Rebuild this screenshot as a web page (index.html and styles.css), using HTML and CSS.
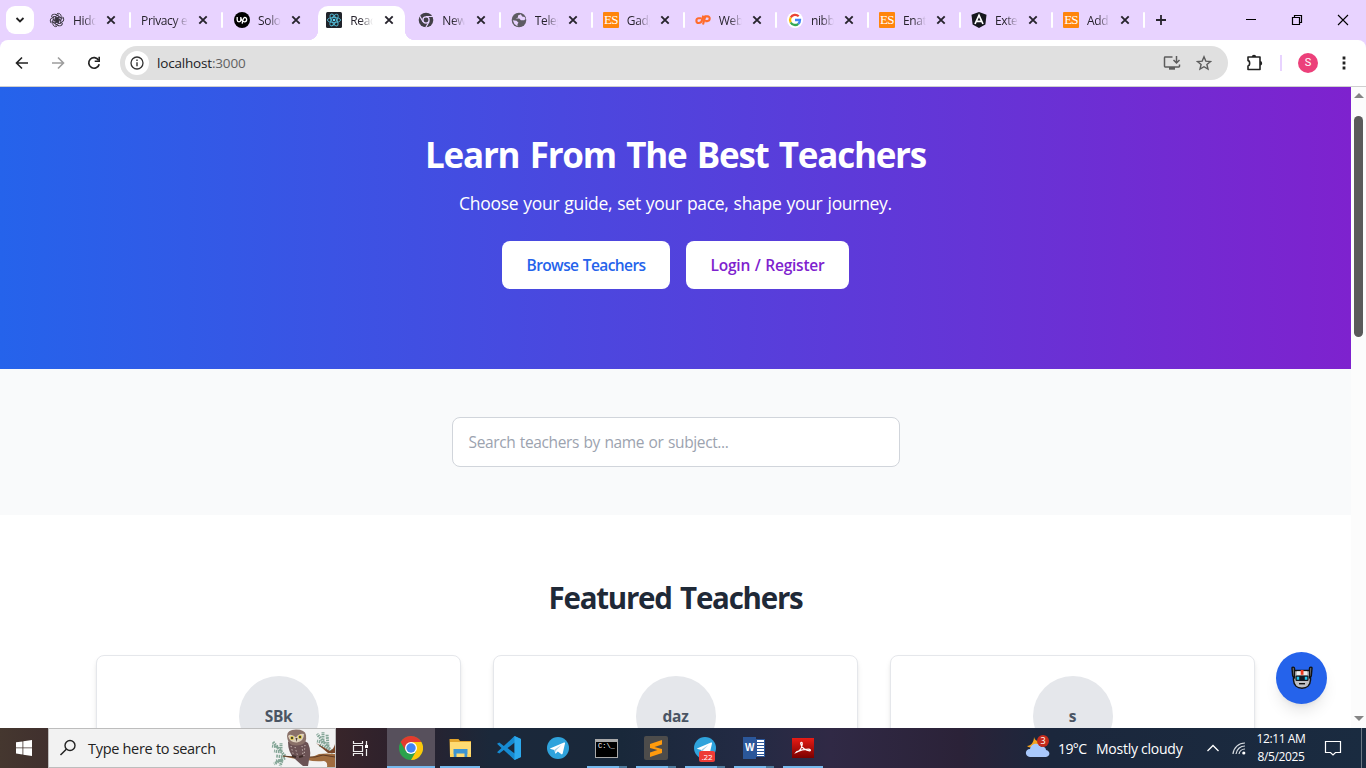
FILE: index.html
```html
<!DOCTYPE html>
<html lang="en">
<head>
<meta charset="utf-8">
<title>React App</title>
<link rel="stylesheet" href="styles.css">
</head>
<body>
<svg class="defs" width="0" height="0">
  <defs>
    <symbol id="x" viewBox="0 0 10 10"><path d="M1.3 1.3l7.4 7.4M8.7 1.3L1.3 8.7" stroke="#27242d" stroke-width="1.9" fill="none"/></symbol>
    <symbol id="plane" viewBox="0 0 24 24"><circle cx="12" cy="12" r="11" fill="#2fa3dc"/><path d="M4.5 12.3L18 6.6c.8-.3 1.200.2 1 1l-2.300 10c-.2.900-.9 1-1.600.5l-3.300-2.500-1.700 1.700c-.5.500-.9.300-1-.3l-.7-3.100-3.800-1c-.8-.2-.8-.3-.1-.6z" fill="#fff"/><path d="M8.600 13.500l6.800-4.500-5.200 5.300-.2 2.600z" fill="#a9cfe4"/></symbol>
  </defs>
</svg>
<div class="screen">
  <header class="tabstrip">
    <button class="tabsearch"><svg width="10" height="8" viewBox="0 0 10 8"><path d="M1.500 2l3.500 3.500L8.500 2" fill="none" stroke="#222" stroke-width="1.800"/></svg></button>
    <nav class="tabs">
      <div class="tab"><svg class="fav" viewBox="0 0 16 16"><g fill="none" stroke="#333039" stroke-width=".9"><g id="petal"><path d="M8 1.700c2-1 4.200.5 4.200 2.600v3.500L9.300 9.500 6.400 8V4.500L9.600 2.700"/></g><use href="#petal" transform="rotate(60 8 8)"/><use href="#petal" transform="rotate(120 8 8)"/><use href="#petal" transform="rotate(180 8 8)"/><use href="#petal" transform="rotate(240 8 8)"/><use href="#petal" transform="rotate(300 8 8)"/></g></svg><span class="name">Hidde</span><svg class="close"><use href="#x"/></svg></div>
      <div class="tab"><span class="name wide">Privacy err</span><svg class="close"><use href="#x"/></svg></div>
      <div class="tab last"><svg class="fav" viewBox="0 0 16 16"><circle cx="8" cy="8" r="8" fill="#000"/><path d="M3.200 5v3.100c0 2.400 3.600 2.400 3.600 0V5M6.800 5.600c.8 2.600 1.900 4.200 3.700 4.200 2.700 0 3-4.300.2-4.300-1.500 0-1.900 1.500-2.500 6.200" fill="none" stroke="#fff" stroke-width="1.300"/></svg><span class="name">Solom</span><svg class="close"><use href="#x"/></svg></div>
      <div class="tab active"><svg class="fav" viewBox="0 0 16 16"><rect width="16" height="16" rx="1.500" fill="#20232a"/><g fill="none" stroke="#51b8d2" stroke-width=".9"><ellipse cx="8" cy="8" rx="6.600" ry="2.600"/><ellipse cx="8" cy="8" rx="6.600" ry="2.600" transform="rotate(60 8 8)"/><ellipse cx="8" cy="8" rx="6.600" ry="2.600" transform="rotate(120 8 8)"/></g><circle cx="8" cy="8" r="1.300" fill="#61dafb"/></svg><span class="name">React</span><svg class="close"><use href="#x"/></svg></div>
      <div class="tab"><svg class="fav" viewBox="0 0 16 16"><circle cx="8" cy="8" r="7.300" fill="#424047"/><circle cx="8" cy="8" r="3.100" fill="#424047" stroke="#e8d3ff" stroke-width="1.300"/><path d="M8 4.500h7M5 9.800L1.600 3.800M11 9.800l-3.400 6" stroke="#e8d3ff" stroke-width="1.200"/></svg><span class="name">New</span><svg class="close"><use href="#x"/></svg></div>
      <div class="tab"><svg class="fav" viewBox="0 0 16 16"><circle cx="8" cy="8" r="7.300" fill="#5e5b63"/><path d="M9.800 2.300L7 3.400v2L4.700 6.600h3.600l1.600 1.700h3.300l1.300-1.300-.8-2-2.500-.5zM1.800 8.300l3.700.4 2 2-1 1.200v2.300L3.400 12z" fill="#e8d3ff"/></svg><span class="name">Teleg</span><svg class="close"><use href="#x"/></svg></div>
      <div class="tab"><b class="fav es">ES</b><span class="name">Gadg</span><svg class="close"><use href="#x"/></svg></div>
      <div class="tab"><svg class="fav" viewBox="0 0 16 16"><path d="M6.300 6.300H3.700C.6 6.300.6 11 3.700 11c2.200 0 2.800-1 3.200-2.500L8.300 3.600M8 12.500l2.300-8.100h2.200c3.200 0 2.700 4.700-.3 4.700h-2" fill="none" stroke="#ff6c2c" stroke-width="2.100"/></svg><span class="name">Webm</span><svg class="close"><use href="#x"/></svg></div>
      <div class="tab"><svg class="fav" viewBox="0 0 16 16"><circle cx="8" cy="8" r="8" fill="#fff"/><g fill="none" stroke-width="2.300"><path d="M11.700 4.300A5 5 0 0 0 3.700 5.500" stroke="#ea4335"/><path d="M3.700 5.500a5 5 0 0 0 0 5" stroke="#fbbc05"/><path d="M3.700 10.500a5 5 0 0 0 7.600 1.300" stroke="#34a853"/><path d="M11.300 11.800A5 5 0 0 0 13 8H8" stroke="#4285f4"/></g></svg><span class="name">nibbl</span><svg class="close"><use href="#x"/></svg></div>
      <div class="tab"><b class="fav es">ES</b><span class="name">Enate</span><svg class="close"><use href="#x"/></svg></div>
      <div class="tab"><svg class="fav" viewBox="0 0 16 16"><path d="M8 0l7.500 2.700-1.100 9.800L8 16l-6.400-3.500L.5 2.700z" fill="#16171d"/><path d="M4 12L8 3.200l4 8.800M5.700 9.300h4.600" stroke="#fff" stroke-width="1.700" fill="none"/></svg><span class="name">Exten</span><svg class="close"><use href="#x"/></svg></div>
      <div class="tab"><b class="fav es">ES</b><span class="name">Add l</span><svg class="close"><use href="#x"/></svg></div>
    </nav>
    <svg class="plus" width="12" height="12" viewBox="0 0 12 12"><path d="M6 1v10M1 6h10" stroke="#28242e" stroke-width="1.800"/></svg>
    <div class="winctl">
      <svg width="12" height="12" viewBox="0 0 12 12"><path d="M1 5.500h10" stroke="#000"/></svg>
      <svg width="12" height="12" viewBox="0 0 12 12"><path d="M1.500 3.500h7v7h-7zM3.500 3.500v-2h7v7h-2" stroke="#000" stroke-width="1.200" fill="none"/></svg>
      <svg width="12" height="12" viewBox="0 0 12 12"><path d="M1 1l10 10M11 1L1 11" stroke="#000" stroke-width="1.100"/></svg>
    </div>
  </header>
  <div class="toolbar">
    <div class="navbtns">
      <svg width="16" height="16" viewBox="0 0 16 16"><path d="M14 8H3M8 2.500L2.500 8 8 13.500" fill="none" stroke="#222" stroke-width="1.600"/></svg>
      <svg width="16" height="16" viewBox="0 0 16 16"><path d="M2 8h11M8 2.500L13.500 8 8 13.500" fill="none" stroke="#9d9d9d" stroke-width="1.600"/></svg>
      <svg width="16" height="16" viewBox="0 0 16 16"><path d="M12.600 5.200A5.300 5.300 0 1 0 13.200 9.200" fill="none" stroke="#222" stroke-width="1.700"/><path d="M14 1.800v5.300H8.700V5.500h3.700V1.800z" fill="#222"/></svg>
    </div>
    <div class="omnibox">
      <span class="info"><svg width="14" height="14" viewBox="0 0 14 14"><circle cx="7" cy="7" r="6" fill="none" stroke="#333" stroke-width="1.300"/><path d="M7 6.200v4M7 3.600v1.400" stroke="#333" stroke-width="1.400"/></svg></span>
      <span class="url">localhost<i>:3000</i></span>
      <svg class="install" width="18" height="16" viewBox="0 0 18 16"><path d="M9.500 2H2.200c-.4 0-.7.300-.7.700v8.600c0 .4.300.7.700.7h13.600c.4 0 .7-.3.700-.7V9.500" fill="none" stroke="#5c5c5c" stroke-width="1.500"/><path d="M6 12h6v2.700H6z" fill="#5c5c5c"/><path d="M13.500 1v7M10.500 5l3 3 3-3" fill="none" stroke="#5c5c5c" stroke-width="1.500"/></svg>
      <svg width="16" height="16" viewBox="0 0 16 16"><path d="M8 1.800l1.800 4.300 4.700.4-3.600 3 1.100 4.600L8 11.700l-4 2.400 1.100-4.600-3.600-3 4.700-.4z" fill="none" stroke="#5c5c5c" stroke-width="1.400"/></svg>
    </div>
    <svg class="ext" width="18" height="18" viewBox="0 0 18 18"><path d="M2 3h12v12.500H2V12c2.200-.4 2.200-5 0-5.400z" fill="none" stroke="#222" stroke-width="1.600" stroke-linejoin="round"/><path d="M5.800 3a2.200 2.200 0 0 1 4.400 0zM14 7a2.200 2.200 0 0 1 0 4.400z" fill="#222"/></svg>
    <span class="divider"></span>
    <span class="profile">S</span>
    <svg class="kebab" width="4" height="14" viewBox="0 0 4 14"><path d="M.6.600h2.800v2.800H.6zM.6 5.600h2.800v2.800H.6zM.6 10.600h2.800v2.800H.6z" fill="#222"/></svg>
  </div>
  <div class="viewport">
    <main class="page">
      <section class="hero">
        <h1>Learn From The Best Teachers</h1>
        <p>Choose your guide, set your pace, shape your journey.</p>
        <div class="actions"><a class="btn browse">Browse Teachers</a><a class="btn login">Login / Register</a></div>
      </section>
      <section class="search"><div class="field"><span>Search teachers by name or subject...</span></div></section>
      <section class="featured">
        <h2>Featured Teachers</h2>
        <div class="cards">
          <article class="card"><div class="avatar">SBk</div></article>
          <article class="card"><div class="avatar">daz</div></article>
          <article class="card"><div class="avatar">s</div></article>
        </div>
      </section>
    </main>
    <aside class="scrollbar"><i class="up"></i><i class="thumb"></i><i class="down"></i></aside>
    <button class="chat"><svg width="24" height="24" viewBox="0 0 24 24"><path d="M3.500 4.500h17v9.500c-.3 5-3.500 8.300-8.500 8.300S3.800 19 3.500 14z" fill="#bfc0c4" stroke="#111" stroke-width="1.500"/><path d="M2 2.200c0-1.500 2.500-1.500 2.500 0v9.500L2.700 10zM22 2.200c0-1.500-2.500-1.500-2.500 0v9.500l1.800-1.700z" fill="#77787c" stroke="#111" stroke-width="1.400"/><path d="M7 5.300h10V9H7z" fill="#eee"/><path d="M10.700 4h2.800v4.800h-2.800z" fill="#ed3b20"/><rect x="5.500" y="9.500" width="13" height="5.500" rx="1" fill="#111820"/><path d="M6.700 10.700h2.500v3H6.700zM14.800 10.700h2.500v3h-2.500z" fill="#24c3ee"/><path d="M9 17.700h6" stroke="#111" stroke-width="1.400"/></svg></button>
  </div>
  <footer class="taskbar">
    <div class="start"><svg width="16" height="16" viewBox="0 0 16 16"><path d="M0 2.300l6.500-.9v6.100H0zM7.300 1.200L16 0v7.500H7.300zM0 8.300h6.500v6.200L0 13.600zM7.300 8.300H16V16l-8.700-1.300z" fill="#fff"/></svg></div>
    <div class="tsearch">
      <svg width="18" height="18" viewBox="0 0 18 18"><circle cx="11" cy="6.500" r="5" fill="none" stroke="#222" stroke-width="1.400"/><path d="M7.300 10.200L1.500 16" stroke="#222" stroke-width="1.500"/></svg>
      <span>Type here to search</span>
      <svg class="owl" width="64" height="38" viewBox="0 0 64 38">
        <g fill="none" stroke="#83a596" stroke-width="3" stroke-dasharray="1.600 .8"><path d="M14 27L2 13M11 23l-8-1M10 22V14M7 18l-6-1M14 28l-9-1M62 24L46 5M59 20l-11-4M57 17L56 5M54 14l-8-2M52 11V3M14 29L3 35M11 31l-6 1M11 32l-2 5"/></g>
        <path d="M10 27q10 1 17 1 12 2 21-3 8-1 16 0v13H56q1-5-3-6-9 1-17-1-14-1-26-4z" fill="#a06c3f"/><path d="M64 15q-1 5-5 7l-14-8 12 10h7z" fill="#7a4628"/><path d="M12 27q14 2 24 1 8 1 16-2l12 2" fill="none" stroke="#5c3823"/>
        <path d="M17 13q9-7 20 1 4 9 1 17l-1 6h-5q-5-4-9-8-6-6-6-16z" fill="#6b5254"/><path d="M16 7q0-6.500 9-6.500T35 6q1 8-4 9.500-5 1.500-10 .5-4.500-2-5-9z" fill="#8a7169"/><path d="M17 7q3-3 8 1.500Q28 4 33 5q0 7-7 8.500-7 .5-9-6.500z" fill="#ddd0bb"/><circle cx="21" cy="9" r="1.900" fill="#d5c038"/><circle cx="29" cy="8" r="1.900" fill="#d5c038"/><circle cx="21" cy="9" r="1" fill="#222"/><circle cx="29" cy="8" r="1" fill="#222"/><path d="M24.500 9h2l-1 4z" fill="#524236"/>
        <g stroke="#cfc0bb" stroke-width="1" stroke-dasharray="1.200 2.200"><path d="M20 17l3 11M24 18l3 10M31 17l1 9M34 16l-1 11"/></g><path d="M21 27l4 1M28 28l4-1" stroke="#3e2c28" stroke-width="2.200"/>
      </svg>
    </div>
    <div class="app view"><svg width="17" height="17" viewBox="0 0 17 17"><path d="M1.500 1v2.500h9V1M1.500 5.500h9v6h-9zM1.500 16v-2.500h9V16" fill="none" stroke="#eee" stroke-width="1.200"/><path d="M14.500 1v4M14.500 9v7" stroke="#eee" stroke-width="1.200"/><path d="M13 5h3v3h-3z" fill="#fff"/></svg></div>
    <div class="apps">
      <div class="app on"><svg width="24" height="24" viewBox="0 0 24 24"><circle cx="12" cy="12" r="12" fill="#2ba24c"/><path d="M1.600 6A12 12 0 0 1 22.400 6H12L6.800 15z" fill="#e33b2e"/><path d="M22.400 6A12 12 0 0 1 12 24l5.200-9L12 6z" fill="#fdc70c"/><circle cx="12" cy="12" r="6" fill="#fff"/><circle cx="12" cy="12" r="4.700" fill="#4284f3"/></svg></div>
      <div class="app run"><svg width="24" height="24" viewBox="0 0 24 24"><path d="M1.500 3h9l1.500 2h11v16h-21z" fill="#e2a42a"/><path d="M2 6h21v15H2z" fill="#ffdb72"/><path d="M5.500 21v-8h14v8h-3v-3.500h-8V21z" fill="#3d95d2"/><path d="M2 18h3.500v3H2zM19.500 18H23v3h-3.500z" fill="#ffd45b"/></svg></div>
      <div class="app"><svg width="24" height="24" viewBox="0 0 24 24"><path d="M17.500 0L24 3v18l-6.500 3L6.800 13.900 2.300 17.500 0 16.300l4.500-4.300L0 7.700l2.300-1.200 4.500 3.600zM17.700 6.600L10.500 12l7.200 5.400z" fill="#168bd2" fill-rule="evenodd"/><path d="M17.500 0L24 3v18l-6.500 3z" fill="#2ca9ed"/></svg></div>
      <div class="app"><svg width="24" height="24"><use href="#plane"/></svg></div>
      <div class="app grp"><div class="cmd">C:\_</div></div>
      <div class="app grp"><svg width="24" height="24" viewBox="0 0 24 24"><rect width="24" height="24" rx="2" fill="#4d4c4b"/><path d="M6 8l12-4v4.500L10.500 11 18 13v4L6 21v-4.500l7.500-2.500L6 12z" fill="#ff9b0d"/></svg></div>
      <div class="app grp"><svg width="24" height="24"><use href="#plane"/></svg><span class="badge">.22</span></div>
      <div class="app grp"><div class="word"><b>W</b><i></i></div></div>
      <div class="app run"><svg width="22" height="22" viewBox="0 0 22 22"><defs><linearGradient id="red" x2="0" y2="1"><stop stop-color="#e71c16"/><stop offset="1" stop-color="#790000"/></linearGradient></defs><rect width="22" height="20" y="1" fill="url(#red)"/><path d="M4 15.500c4.500-1.500 6-5.500 6.300-8.500.1-2.200-1.800-2.200-1.600-.2.400 4 5.300 7 9 7 1.500-.2.500-1.600-1.200-1.600-5 0-8.500 1-12 2.700z" fill="none" stroke="#fff" stroke-width="1.200"/></svg></div>
    </div>
    <div class="weather">
      <div class="wicon"><svg width="26" height="24" viewBox="0 0 26 24"><path d="M9 1c1 4 4 5 7 4-1 5-5 8-9 6-2 1-4 0-5-1 4 0 7-4 7-9z" fill="#f5a31e"/><path d="M5 21c-6-1-5-8 0-8 1-6 9-7 11-2 3-1 5 1 5 3 5 1 4 7 0 7z" fill="#a9c8fb"/></svg><span>3</span></div>
      <span class="temp">19°C</span><span class="cond">Mostly cloudy</span>
    </div>
    <svg class="chev" width="14" height="8" viewBox="0 0 14 8"><path d="M1.500 7L7 1.500 12.500 7" fill="none" stroke="#fff" stroke-width="1.300"/></svg>
    <svg class="wifi" width="14" height="14" viewBox="0 0 14 14"><g fill="none" stroke="#d7dce1" stroke-width="1.200"><path d="M1 13A12 12 0 0 1 13 2M4 13a9 9 0 0 1 9-8M7 13a6 6 0 0 1 6-5"/></g><circle cx="11.800" cy="12" r="1.600" fill="#fff"/></svg>
    <div class="clock"><span>12:11 AM</span><span>8/5/2025</span></div>
    <svg class="note" width="18" height="18" viewBox="0 0 18 18"><path d="M1.500 2.500h15v11h-5L9 16l-2.500-2.500h-5z" fill="none" stroke="#fff" stroke-width="1.200"/></svg>
    <span class="peek"></span>
  </footer>
</div>
</body>
</html>
```
FILE: styles.css
```css
* { box-sizing: border-box; }
body { margin: 0; overflow: hidden; font-family: "Open Sans", "Noto Sans", sans-serif; }
svg { display: block; flex: none; }
button { border: 0; padding: 0; }
i { font-style: normal; }
.defs { position: absolute; }
.screen { width: 1366px; height: 768px; display: flex; flex-direction: column; background: #e8d3ff; }

/* tab strip */
.tabstrip { height: 40px; flex: none; display: flex; align-items: center; background: #e8d3ff; }
.tabsearch { width: 28px; height: 28px; margin-left: 6px; border-radius: 9px; background: #fff; display: grid; place-items: center; }
.tabs { display: flex; height: 40px; margin-left: 4px; width: 1106px; }
.tab { position: relative; flex: 1 1 0; display: flex; align-items: center; padding-left: 11px; }
.tab::after { content: ""; position: absolute; right: -1px; top: 12px; width: 2px; height: 16px; background: #fff; border-radius: 1px; }
.tab.last::after, .tab.active::after { display: none; }
.tab.active::before { content: ""; position: absolute; z-index: 0; left: 4px; right: 2px; top: 6px; bottom: 0; background: #fff; border-radius: 10px 10px 0 0; }
.tab.last { flex: 0 0 auto; width: 96.2px; margin-right: -4px; padding-left: 12px; padding-right: 3px; background: radial-gradient(circle at 0 0, transparent 10px, #fff 10.5px) 100% 100% / 10px 10px no-repeat; }
.tab.active + .tab { flex: 0 0 auto; width: 94.5px; margin-left: -2px; padding-left: 13px; background: radial-gradient(circle at 100% 0, transparent 10px, #fff 10.5px) 0 100% / 10px 10px no-repeat; }
.tab.active { padding-left: 12px; }
.tab.active .close { margin-right: 13px; }
.tab > * { position: relative; z-index: 1; }
.fav { width: 16px; height: 16px; margin-right: 8px; flex: none; }
.es { background: #ff850c; border-radius: 1px; color: #fff; font: 13px/16px "Liberation Serif", serif; letter-spacing: -.8px; text-align: center; }
.name { width: 23px; flex: none; overflow: hidden; white-space: nowrap; font-size: 12px; letter-spacing: -.35px; color: #27232d; -webkit-mask-image: linear-gradient(90deg, #000 45%, transparent); mask-image: linear-gradient(90deg, #000 45%, transparent); }
.name.wide { width: 47px; -webkit-mask-image: linear-gradient(90deg, #000 70%, transparent); mask-image: linear-gradient(90deg, #000 70%, transparent); }
.close { width: 10px; height: 10px; margin-left: auto; margin-right: 14px; }
.plus { margin-left: 11px; }
.winctl { margin-left: auto; margin-right: 17px; display: flex; gap: 34px; }

/* address bar */
.toolbar { height: 47px; flex: none; background: #fff; border-bottom: 1px solid #cfcfcf; border-radius: 8px 8px 0 0; display: flex; align-items: center; }
.navbtns { display: flex; gap: 20px; margin-left: 14px; width: 106px; }
.omnibox { width: 1108px; height: 34px; border-radius: 17px; background: #e0e0e0; display: flex; align-items: center; padding: 0 16px 0 5px; }
.info { width: 24px; height: 24px; border-radius: 50%; background: #fff; display: grid; place-items: center; }
.url { margin-left: 8px; font-size: 13.5px; line-height: 18px; letter-spacing: -.18px; color: #202124; }
.url i { color: #626262; }
.install { margin-left: auto; margin-right: 15px; }
.ext { margin-left: 18px; }
.divider { width: 2px; height: 16px; margin-left: 16px; background: #e8d3ff; }
.profile { width: 20px; height: 20px; margin-left: 16px; border-radius: 50%; background: #ec407a; color: #fff; font: 11px/20px Roboto, sans-serif; text-align: center; }
.kebab { margin-left: 24px; }

/* page */
.viewport { position: relative; height: 641px; flex: none; display: flex; overflow: hidden; background: #fff; }
.page { width: 1351px; }
.hero { height: 282px; padding-top: 48px; background: linear-gradient(90deg, #2563eb, #7e22ce); color: #fff; text-align: center; }
h1, h2, p { margin: 0; white-space: nowrap; }
h1 { font-size: 35px; line-height: 40px; letter-spacing: -1.25px; word-spacing: 2.5px; }
.hero p { margin-top: 14px; font-size: 17.5px; line-height: 28px; letter-spacing: -.3px; word-spacing: .8px; }
.actions { display: flex; justify-content: center; gap: 16px; margin-top: 24px; }
.btn { height: 48px; border-radius: 8px; background: #fff; font-size: 15.5px; line-height: 49px; font-weight: 600; white-space: nowrap; }
.browse { width: 168px; color: #2563eb; letter-spacing: -.6px; word-spacing: 1px; }
.login { width: 163px; color: #7e22ce; letter-spacing: -.25px; word-spacing: 1px; }
.search { height: 146px; padding-top: 48px; background: #f9fafb; }
.field { width: 448px; height: 50px; margin: 0 auto; border: 1px solid #d1d5db; border-radius: 8px; background: #fff; padding-left: 16px; font-size: 15.5px; line-height: 49px; letter-spacing: -.37px; word-spacing: .8px; color: #9ca3af; }
.featured { padding-top: 65px; text-align: center; }
h2 { font-size: 29.5px; line-height: 36px; color: #1f2937; letter-spacing: -1.25px; word-spacing: 2px; }
.cards { display: grid; grid-template-columns: repeat(3, 365px); gap: 32px; justify-content: center; margin-top: 39px; }
.card { height: 260px; border: 1px solid #e5e7eb; border-radius: 8px; padding-top: 20px; background: #fff; box-shadow: 0 4px 6px -1px #0000001a, 0 2px 4px -2px #0000001a; }
.avatar { width: 80px; height: 80px; margin: 0 auto; border-radius: 50%; background: #e5e7eb; color: #4b5563; font-size: 15.5px; line-height: 80px; font-weight: 700; letter-spacing: -.3px; }
.scrollbar { width: 15px; background: #fcfcfc; display: flex; flex-direction: column; align-items: center; padding: 6px 0 7px; }
.up, .down { border: 5px solid transparent; }
.up { border-top: 0; border-bottom: 5px solid #858585; }
.down { border-bottom: 0; border-top: 5px solid #858585; margin-top: auto; }
.thumb { width: 9px; height: 221px; margin-top: 18px; border-radius: 5px; background: #5a5a5a; }
.chat { position: absolute; left: 1276px; top: 565px; width: 51px; height: 52px; border-radius: 50%; background: #2563eb; display: grid; place-items: center; box-shadow: 0 10px 15px -3px #0000001a, 0 4px 6px -4px #0000001a; }

/* taskbar */
.taskbar { height: 40px; flex: none; display: flex; align-items: center; color: #fff; background: linear-gradient(90deg, #45372f 0, #40302e 48px, #38252a 336px, #2c202c 400px, #1b283a 490px, #19283a 620px, #222a43 740px, #302945 830px, #2b2238 960px, #1b273c 1050px, #1a2b40 1366px); }
.start { width: 48px; display: grid; place-items: center; }
.tsearch { width: 288px; height: 40px; background: #f2f2f2; border: 1px solid #bdbdbd; display: flex; align-items: center; padding-left: 10px; color: #222; font-size: 14.5px; letter-spacing: -.3px; }
.tsearch span { margin-left: 11px; white-space: nowrap; }
.owl { margin-left: auto; }
.app { position: relative; width: 48px; height: 40px; display: grid; place-items: center; }
.view { margin-right: 3px; }
.apps { display: flex; gap: 1px; width: 441px; }
.on { background: #57505c; }
.on::after, .run::after, .grp::after { content: ""; position: absolute; left: 4px; bottom: 0; width: 40px; height: 2px; background: #76b9ed; }
.on::after { left: 0; width: 48px; }
.grp::after { background: linear-gradient(90deg, #76b9ed 32px, #4e7b9d 32px); }
.cmd { width: 23px; height: 19px; margin-right: 1px; background: #000; border: 1px solid #aaa; border-top-width: 3px; color: #fff; font: 7px/8px "Liberation Mono", monospace; padding-left: 2px; }
.badge { position: absolute; left: 18px; top: 23px; width: 16px; height: 11px; border-radius: 2px; background: #ee3b36; font-size: 8px; line-height: 11px; text-align: center; }
.word { display: flex; align-items: center; width: 22px; height: 22px; }
.word b { width: 14px; height: 22px; background: #2b579a; font: bold 10px/22px "Liberation Sans", sans-serif; text-align: center; }
.word i { width: 9px; height: 18px; border: 1px solid #2b579a; background: repeating-linear-gradient(#fff 0 2px, #2b579a 2px 3px); }
.weather { display: flex; align-items: center; margin-left: 197px; width: 170px; font-size: 14px; letter-spacing: -.25px; white-space: nowrap; }
.wicon { position: relative; width: 26px; flex: none; }
.wicon span { position: absolute; left: 12px; top: -1px; width: 12px; height: 12px; border-radius: 50%; background: #c42b1c; font-size: 9px; line-height: 12px; text-align: center; }
.temp { margin-left: 7px; width: 38px; flex: none; letter-spacing: -.6px; }
.chev { margin-left: 11px; }
.wifi { margin-left: 12px; }
.clock { width: 64px; margin-left: 3px; display: flex; flex-direction: column; text-align: center; font-size: 12px; line-height: 18px; letter-spacing: -.4px; }
.note { margin-left: 11px; }
.peek { width: 1px; height: 40px; margin-left: auto; margin-right: 4px; background: #6d7884; }
```
